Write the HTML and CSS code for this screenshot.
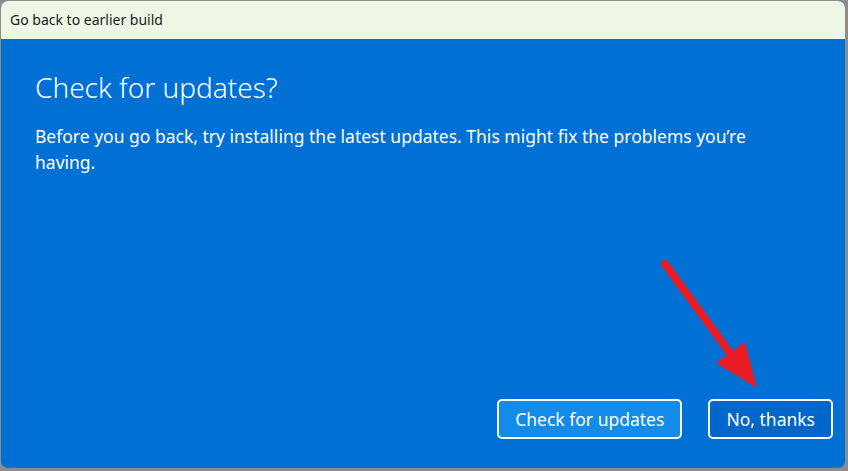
FILE: index.html
```html
<!DOCTYPE html>
<html lang="en">
<head>
  <meta charset="UTF-8" />
  <title>Go back to earlier build</title>
  <link rel="stylesheet" href="styles.css">
</head>
<body>
  <div class="window">
    <div class="titlebar">Go back to earlier build</div>
    <div class="content">
      <h1>Check for updates?</h1>
      <p>Before you go back, try installing the latest updates. This might fix the problems you’re having.</p>
      <div class="actions">
        <button class="btn primary">Check for updates</button>
        <button class="btn">No, thanks</button>
      </div>
    </div>
    <svg class="arrow" width="848" height="471" viewBox="0 0 848 471">
      <line x1="665" y1="264" x2="738" y2="364" stroke="#e81c24" stroke-width="8" stroke-linecap="round" />
      <polygon points="716,363 745,342 757,388" fill="#e81c24" />
    </svg>
  </div>
</body>
</html>
```

FILE: styles.css
```css
body { margin: 0; background: #8c8c8c; font-family: "Noto Sans", "Open Sans", sans-serif; }
.window { position: relative; margin: 1px 3px 0 1px; height: 467px; border-radius: 7px; overflow: hidden; display: flex; flex-direction: column; background: #0070d4; }
.titlebar { height: 38px; background: #eef7e6; color: #1b1b1b; font-size: 14px; padding-left: 9px; line-height: 38px; }
.content { flex: 1; display: flex; flex-direction: column; padding: 0 12px 29px 34px; color: #fff; }
h1 { margin: 30px 0 0; font-size: 28px; font-weight: 300; line-height: 36px; }
p { margin: 18px 0 0; font-size: 17.5px; line-height: 26px; max-width: 740px; }
.actions { margin-top: auto; display: flex; justify-content: flex-end; gap: 26px; }
.btn { height: 40px; padding: 0 16px; border: 2px solid #fff; border-radius: 5px; background: #0066c9; color: #fff; font-family: inherit; font-size: 17.5px; }
.btn.primary { background: #138ce9; }
.arrow { position: absolute; left: -1px; top: -1px; pointer-events: none; }
```
